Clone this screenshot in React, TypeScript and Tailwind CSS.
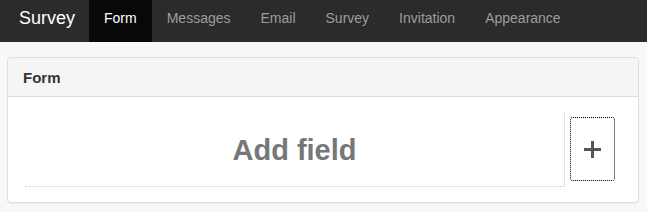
const navItems = ['Form', 'Messages', 'Email', 'Survey', 'Invitation', 'Appearance'];

export default function App() {
  const active = 'Form';

  return (
    <div className="min-h-[212px] bg-[#f8f8f8] font-['Liberation_Sans',Arial,sans-serif]">
      <nav className="flex h-[42px] items-stretch bg-[#2b2b2b]">
        <a className="pl-[19px] pr-[14px] pt-[6px] text-[18px] leading-[24px] text-white">Survey</a>
        <ul className="flex items-stretch">
          {navItems.map((item) => (
            <li key={item}>
              <a
                className={`block h-full px-[15px] pt-[8px] text-[14px] leading-[20px] ${
                  item === active ? 'bg-[#080808] text-white' : 'text-[#9d9d9d]'
                }`}
              >
                {item}
              </a>
            </li>
          ))}
        </ul>
      </nav>

      <div className="pl-[7px] pr-[8px] pt-[15px] pb-[10px]">
        <div className="overflow-hidden rounded-[4px] border border-[#dddddd] bg-white shadow-[0_1px_1px_rgba(0,0,0,0.05)]">
          <div className="h-[39px] border-b border-[#dddddd] bg-[#f5f5f5] pl-[15px] pt-[10px] text-[15px] font-bold leading-[20px] text-[#333333]">
            Form
          </div>
          <div className="flex items-start gap-[5px] pl-[17px] pr-[23px] pt-[15px] pb-[15px]">
            <div className="flex h-[75px] flex-1 items-center justify-center border-r border-b border-dotted border-[#cccccc]">
              <span className="pt-[3px] text-[29px] font-bold text-[#777777]">Add field</span>
            </div>
            <button className="mt-[5px] flex h-[64px] w-[45px] items-center justify-center rounded-[3px] border border-dotted border-black bg-white">
              <svg width="17" height="17" viewBox="0 0 17 17">
                <rect x="7" y="0" width="3" height="17" fill="#555555" />
                <rect x="0" y="7" width="17" height="3" fill="#555555" />
              </svg>
            </button>
          </div>
        </div>
      </div>
    </div>
  );
}
